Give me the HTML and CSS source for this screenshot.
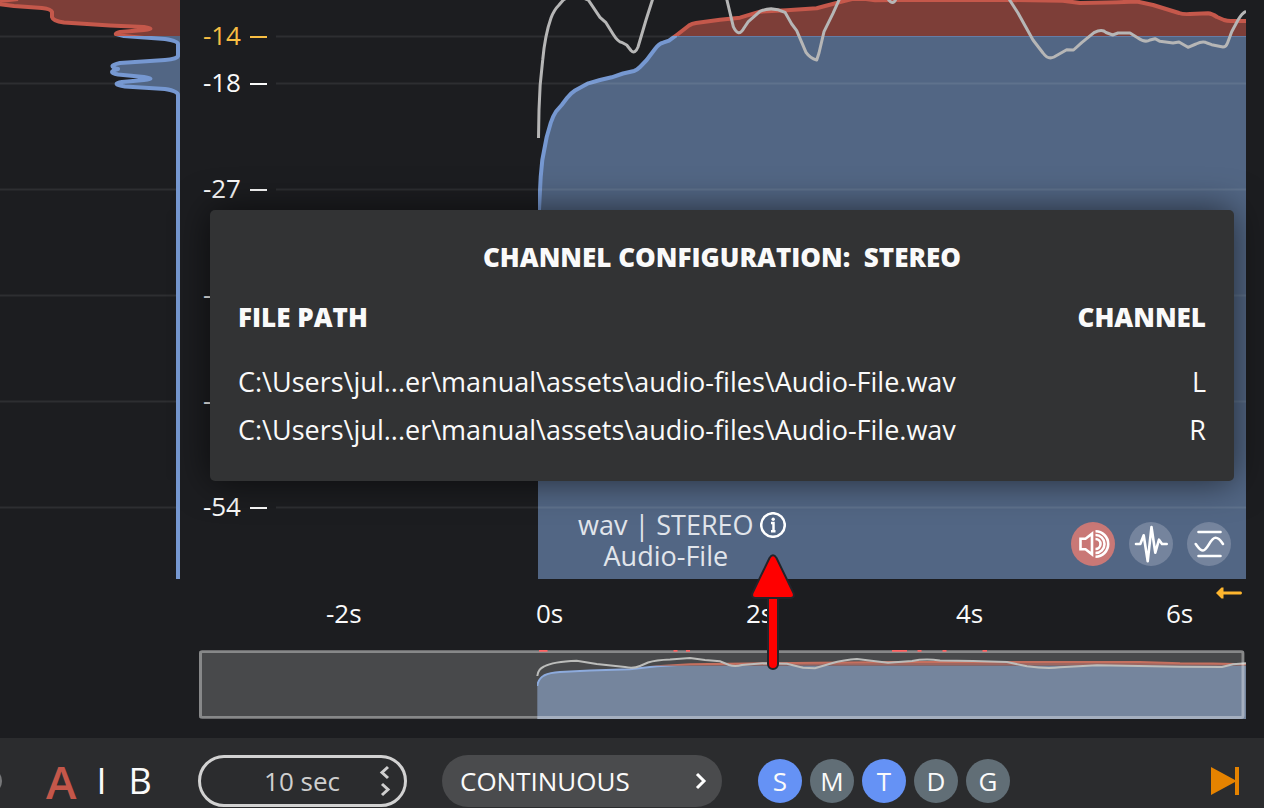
FILE: index.html
```html
<!DOCTYPE html>
<html lang="en">
<head>
<meta charset="utf-8">
<title>Loudness timeline</title>
<link rel="stylesheet" href="styles.css">
</head>
<body>
<main class="app">
  <section class="plots">
    <svg class="histogram" viewBox="0 0 180 579" preserveAspectRatio="none" aria-hidden="true">
      <defs>
        <clipPath id="h-over"><rect x="0" y="-5" width="180" height="41"/></clipPath>
        <clipPath id="h-under"><rect x="0" y="36" width="180" height="543"/></clipPath>
      </defs>
      <path class="grid" d="M0 36.500H180M0 83.500H180M0 189.500H180M0 295.500H180M0 401.500H180M0 507.500H180"/>
      <g clip-path="url(#h-over)">
        <path class="over-fill" d="M180 -4H0V4L14 6L42 8Q51 9 52 12V17Q53 21 64 22.500L110 25.500L144 27Q157 29 144 30L120 32Q110 34.500 124 36L180 41Z"/>
        <path class="over-line" d="M18 -1L0 1M-2 4L14 6L42 8Q51 9 52 12V17Q53 21 64 22.500L110 25.500L144 27Q157 29 144 30L120 32Q110 34.500 124 36L165 40"/>
      </g>
      <g clip-path="url(#h-under)">
        <path class="under-fill" d="M180 36H124L165 39Q178 41 178 44V56Q177 59 165 60L120 63Q106 66 118 69Q106 72 118 74.500L144 77Q157 79 144 80L122 82Q110 84 125 86.500L165 89Q178 91 178 95V579H180Z"/>
        <path class="under-line" d="M116 34L124 36L165 39Q178 41 178 44V56Q177 59 165 60L120 63Q106 66 118 69Q106 72 118 74.500L144 77Q157 79 144 80L122 82Q110 84 125 86.500L165 89Q178 91 178 95V582"/>
      </g>
    </svg>

    <ul class="scale">
      <li class="scale-item scale-item-first scale-item-target">-14</li>
      <li class="scale-item">-18</li>
      <li class="scale-item">-27</li>
      <li class="scale-item">-36</li>
      <li class="scale-item">-45</li>
      <li class="scale-item scale-item-last">-54</li>
    </ul>

    <div class="chart">
      <svg class="chart-plot" viewBox="276 0 970 579" preserveAspectRatio="none" aria-hidden="true">
        <defs>
          <clipPath id="c-over"><rect x="530" y="-10" width="716" height="46"/></clipPath>
          <clipPath id="c-under"><rect x="538" y="36" width="708" height="543"/></clipPath>
          <path id="level" d="M538 579V250L539 210L540.700 177L542.300 160L546.700 137L550.700 123Q553 116 556 111.500L561.700 105L567 98Q571 93 575 90.500L588.300 83.300L600 80L611.700 77.300L623 73.500L634 71Q637 70 640 67L646.700 60L655 49Q659 43.500 663 42.700L669 40.700L676.700 35L689 25.500Q692 23.500 696 23L720 19.700L740 17.700L760 11.700L786.700 10.300L816.700 8.300L825 6L843 1.300L852 -1L866 -1L875 .3L893 0L1006 0L1063 .7L1080 3L1117 2.300L1137 1.500L1153 5L1179 13Q1183 14.500 1190 14L1208 13.300Q1212 13.500 1217 17L1224 20Q1227 21 1231 21L1250 21V579Z"/>
        </defs>
        <g clip-path="url(#c-under)">
          <use href="#level" class="under-fill"/>
          <use href="#level" class="under-line"/>
          <path class="under-fill" d="M543 250H1247V582H538V250Z"/>
          <path class="threshold" d="M677 36.500H1246"/>
        </g>
        <g clip-path="url(#c-over)">
          <use href="#level" class="over-fill"/>
          <use href="#level" class="over-line"/>
        </g>
        <path class="grid" d="M276 36.500H677M276 83.500H1246M276 189.500H1246M276 295.500H1246M276 401.500H1246M276 507.500H1246"/>
        <path class="momentary" d="M538.500 138L539 110Q539.500 85 542.700 60Q545 35 551 18Q554 10 559 5L563.300 0L573 -6L588.300 0L600 17.300L606 22.700L613 34Q618 42 622 42.500L626.700 45L631 50.500Q635 54.500 638 47L646 20L652.700 -1M726.700 -1L733.300 26.700Q738.500 38 744 28L748.300 21.700L760 11.300Q772 6 785 12.300L791.700 24L796.700 30.700L806 52.300Q810 58 816.700 60L819 53L824 31.700L833 13.300L839.500 -1M888 -1Q893 6 896 -1M1009 -1L1018 13L1033 40L1043 53Q1048 60 1054 57L1066.700 49.700L1073.500 50L1081.700 42.700L1094 32.700Q1102 28.500 1106 32.500L1112.700 35L1118 33L1130 33L1138 38Q1145 43 1150 40L1155 38.700L1160 41.300L1173 43L1179 42L1188 47.300L1196 44Q1203 40.500 1207 43L1211.700 44.700L1223 47Q1226 47 1227.500 43L1231.700 31.700L1238 20Q1242 13 1246 11.300"/>
      </svg>

      <div class="clip-bar">
        <div class="clip-info">
          <span class="clip-format">wav | STEREO</span>
          <button class="info-button" type="button" aria-label="Channel configuration">
            <svg class="info-icon" viewBox="0 0 26 26" aria-hidden="true"><circle cx="13" cy="13" r="11.800"/><path d="M11 11H13.500V19M11 19.300H15.500"/><circle class="info-dot" cx="13.200" cy="7.200" r="1.700"/></svg>
            <svg class="pointer" viewBox="0 0 46 118" aria-hidden="true">
              <rect x="18" y="40" width="10" height="76" rx="5"/>
              <path d="M19.500 5Q23 -.5 26.500 5L43.500 40Q45 45 40.500 45H5.500Q1 45 2.500 40Z"/>
            </svg>
          </button>
          <span class="clip-name">Audio-File</span>
        </div>
        <div class="clip-tools">
          <button class="tool tool-active" type="button" aria-label="Listen">
            <svg viewBox="0 0 44 44" aria-hidden="true"><path d="M9.500 16.700H14.500L21 11.700V32.300L14.500 27.300H9.500Z"/><path d="M24.500 17A5 5 0 0 1 24.500 27M24.500 13A9 9 0 0 1 24.500 31M24.500 9.300A12.700 12.700 0 0 1 24.500 34.700"/></svg>
          </button>
          <button class="tool" type="button" aria-label="Waveform">
            <svg viewBox="0 0 44 44" aria-hidden="true"><path d="M7 22H11.300L14.700 13.300L18.700 39.300L22.500 5L26.300 30.700L30 17.700L33 22H37.700"/></svg>
          </button>
          <button class="tool" type="button" aria-label="Limits">
            <svg viewBox="0 0 44 44" aria-hidden="true"><path d="M11.500 10H33.500M11.500 34H33.500M8.700 22C11 25 13 28.500 16 28.500C20.500 28.500 23.500 15.800 28.500 15.800C32 15.800 34 19 36 22"/></svg>
          </button>
        </div>
      </div>
    </div>

    <aside class="popup" role="dialog" aria-labelledby="popup-title">
      <h2 class="popup-title" id="popup-title">CHANNEL CONFIGURATION:&nbsp; STEREO</h2>
      <table class="files">
        <thead><tr><th scope="col">FILE PATH</th><th class="files-channel" scope="col">CHANNEL</th></tr></thead>
        <tbody>
          <tr><td>C:\Users\jul...er\manual\assets\audio-files\Audio-File.wav</td><td class="files-channel">L</td></tr>
          <tr><td>C:\Users\jul...er\manual\assets\audio-files\Audio-File.wav</td><td class="files-channel">R</td></tr>
        </tbody>
      </table>
    </aside>
  </section>

  <div class="time-axis">
    <span class="tick">-2s</span>
    <span class="tick">0s</span>
    <span class="tick">2s</span>
    <span class="tick">4s</span>
    <div class="tick-end">
      <span class="tick">6s</span>
      <svg class="scroll-mark" viewBox="0 0 27 12" aria-hidden="true"><path d="M6 4.500H25Q27 6 25 7.500H6Z"/><path d="M0 6L5.500 .5H7.500V11.500H5.500Z"/></svg>
    </div>
  </div>

  <svg class="overview" viewBox="198 650 1048 69" preserveAspectRatio="none" role="img" aria-label="Timeline overview">
    <defs>
      <clipPath id="o-over"><rect x="537" y="650" width="709" height="15.500"/></clipPath>
      <clipPath id="o-under"><rect x="537" y="665.500" width="709" height="54"/></clipPath>
      <path id="overview-level" d="M537.300 686Q538 679 544 675.500Q550 672.500 560 672L590 670.500L630 669.300L656.700 666.300L690 664.300L770 663.300L890 662L1140 662L1180 663.300L1213 663.500L1246 664.300"/>
    </defs>
    <rect class="overview-base" x="199" y="651" width="1045" height="67"/>
    <g clip-path="url(#o-under)">
      <path class="overview-under" d="M537.300 719V686Q538 679 544 675.500Q550 672.500 560 672L590 670.500L630 669.300L656.700 666.300L675 665H1246V719Z"/>
      <use href="#overview-level" class="overview-line overview-line-under"/>
    </g>
    <g clip-path="url(#o-over)">
      <path class="overview-over" d="M660 666L690 664.300L770 663.300L890 662L1140 662L1180 663.300L1246 664.300V666Z"/>
      <use href="#overview-level" class="overview-line overview-line-over"/>
    </g>
    <path class="overview-line overview-line-momentary" d="M537.300 676Q538 669 544 666.500Q553 661.500 576.700 660.700L596.700 664L625 667Q633 669 640 666L648 662.500Q656 660 670 659.500L690 658L705 660L720 661.300L729 665Q735 667 742 665L763 663.300L787 663.700L803 667.700L815 668.300L830 663.700Q845 659.500 857 659L888 662.700L912 661Q925 658.500 940 660.500L973 661L1007 662L1027 666.300Q1047 669 1060 667.300L1097 665.300L1180 666.700L1222 667L1233 664.300L1246 663.300"/>
    <rect class="overview-frame" x="200.500" y="651.500" width="1042.500" height="66" rx="2"/>
    <path class="peaks" d="M539 650.700H547.500M673.500 650.700H677.500M686 650.700H690M892 650.700H907M917.500 650.700H921.500M942.500 650.700H946.500M982.500 650.700H987"/>
  </svg>

  <footer class="toolbar">
    <button class="knob" type="button" aria-label="Previous"></button>
    <div class="ab">
      <button class="ab-button ab-active" type="button">A</button>
      <span class="ab-divider">I</span>
      <button class="ab-button" type="button">B</button>
    </div>
    <div class="duration">
      <input class="duration-input" type="text" value="10 sec" aria-label="Window length">
      <div class="stepper">
        <button class="step" type="button" aria-label="Shorter"><svg viewBox="0 0 12 15" aria-hidden="true"><path d="M9 2L3 7.500L9 13"/></svg></button>
        <button class="step" type="button" aria-label="Longer"><svg viewBox="0 0 12 15" aria-hidden="true"><path d="M3 2L9 7.500L3 13"/></svg></button>
      </div>
    </div>
    <button class="mode" type="button">CONTINUOUS
      <svg class="mode-chevron" viewBox="0 0 12 18" aria-hidden="true"><path d="M2 2L9 9L2 16"/></svg>
    </button>
    <div class="toggles">
      <button class="toggle toggle-on" type="button" aria-pressed="true">S</button>
      <button class="toggle" type="button" aria-pressed="false">M</button>
      <button class="toggle toggle-on" type="button" aria-pressed="true">T</button>
      <button class="toggle" type="button" aria-pressed="false">D</button>
      <button class="toggle" type="button" aria-pressed="false">G</button>
    </div>
    <button class="skip" type="button" aria-label="Follow playhead">
      <svg viewBox="0 0 30 28" aria-hidden="true"><path d="M1 0L25 13V0H29V28H25V15L1 28Z"/></svg>
    </button>
  </footer>
</main>
</body>
</html>
```

FILE: styles.css
```css
* { box-sizing: border-box; }

body {
  margin: 0;
  background: #1c1d20;
  color: #fafafa;
  font-family: "Open Sans", "Noto Sans", sans-serif;
  font-size: 26px;
  font-weight: 500;
  line-height: 31px;
}

button, input {
  margin: 0;
  padding: 0;
  border: 0;
  background: none;
  color: inherit;
  font: inherit;
}

button { cursor: pointer; }
svg { display: block; }

.app {
  display: flex;
  flex-direction: column;
  min-height: 100vh;
  overflow: hidden;
}

/* Plots */
.plots {
  position: relative;
  display: grid;
  grid-template-columns: 180px 96px 1fr;
  padding-right: 18px;
}

.histogram { width: 100%; height: 579px; }

.grid { fill: none; stroke: rgba(255, 255, 255, 0.08); stroke-width: 2px; }
.over-fill { fill: #7d3e38; }
.under-fill { fill: #526684; }
.over-line, .under-line, .momentary {
  fill: none;
  stroke-width: 4px;
  stroke-linejoin: round;
}
.over-line { stroke: #c5584b; }
.under-line { stroke: #7698d1; }
.momentary { stroke: #b6b6b6; stroke-width: 3px; }
.threshold { fill: none; stroke: #647da6; stroke-width: 1px; }

.scale {
  margin: 0;
  padding: 20px 9px 0 0;
  list-style: none;
}

.scale-item {
  display: flex;
  justify-content: flex-end;
  gap: 9px;
  height: 106px;
}
.scale-item-first { height: 47px; }
.scale-item-last { height: auto; }
.scale-item-target { color: #f8be43; }
.scale-item::after {
  content: "";
  width: 17px;
  height: 2px;
  margin-top: 16px;
  background: currentColor;
}

.chart { display: grid; grid-template-columns: 262fr 708fr; }
.chart-plot { grid-area: 1 / 1 / 2 / 3; width: 100%; height: 579px; }

.clip-bar {
  grid-area: 1 / 2;
  align-self: end;
  display: flex;
  justify-content: space-between;
  align-items: center;
  padding: 0 15px 8px 40px;
}

.clip-info {
  display: grid;
  grid-template-columns: auto auto;
  column-gap: 6px;
  align-items: center;
  text-align: center;
  color: #e1e5eb;
  font-size: 27px;
}

.info-button { position: relative; z-index: 3; width: 26px; height: 26px; }
.info-icon { width: 26px; height: 26px; fill: none; stroke: #fff; stroke-width: 2.500px; }
.info-icon .info-dot { fill: #fff; stroke: none; }

.pointer {
  position: absolute;
  top: 41px;
  left: -10px;
  width: 46px;
  height: 118px;
  fill: #f00;
  stroke: #23242a;
  stroke-width: 2px;
  pointer-events: none;
}

.clip-tools { display: flex; gap: 14px; padding-top: 8px; }
.tool { width: 44px; height: 44px; border-radius: 50%; background: #75849d; }
.tool-active { background: #c97876; }
.tool svg {
  fill: none;
  stroke: #fff;
  stroke-width: 2.600px;
  stroke-linecap: round;
  stroke-linejoin: round;
}
.tool-active svg { stroke-linecap: butt; stroke-linejoin: miter; }

/* Channel popup */
.popup {
  position: absolute;
  top: 210px;
  left: 210px;
  right: 30px;
  z-index: 2;
  padding: 29px 28px 27px;
  border-radius: 5px;
  background: #323334;
  box-shadow: 0 0 36px rgba(0, 0, 0, 0.6);
}

.popup-title {
  margin: 0;
  font-size: 26px;
  font-weight: 800;
  line-height: 36px;
  text-align: center;
}

.files { width: 100%; border-collapse: collapse; }
.files th {
  padding: 24px 0 23px;
  font-weight: 800;
  line-height: 36px;
  text-align: left;
}
.files td { padding: 0; font-size: 27px; line-height: 48px; }
.files .files-channel { text-align: right; }

/* Time axis */
.time-axis {
  display: grid;
  grid-template-columns: 210fr 210fr 210fr 210fr 98fr;
  height: 71px;
  padding: 8px 0 0 326px;
}
.tick { padding-top: 11px; }
.tick-end { display: flex; justify-content: space-between; padding-right: 21px; }
.scroll-mark { width: 27px; height: 12px; fill: #fdb52e; }

/* Overview */
.overview { width: calc(100% - 216px); height: 69px; margin: 0 18px 19px 198px; }
.overview-base { fill: #48494b; }
.overview-under { fill: #75859d; }
.overview-over { fill: #9d6660; }
.overview-line { fill: none; stroke-width: 2px; }
.overview-line-under { stroke: #8dabdd; }
.overview-line-over { stroke: #c5705f; }
.overview-line-momentary { stroke: #bcbdbb; }
.overview-frame { fill: none; stroke: rgba(255, 255, 255, 0.35); stroke-width: 3px; }
.peaks { fill: none; stroke: #ff6464; stroke-width: 2px; }

/* Toolbar */
.toolbar {
  display: flex;
  align-items: center;
  flex: 1;
  min-height: 70px;
  padding: 16px 24px 0 0;
  background: #2b2c2e;
}

.knob { width: 26px; height: 26px; margin-left: -24px; border-radius: 50%; background: #77787a; }

.ab {
  display: flex;
  align-items: center;
  width: 196px;
  padding-left: 44px;
  gap: 20px;
  font-size: 36px;
  line-height: 48px;
}
.ab-active { color: #c4574a; font-size: 46px; font-weight: 600; line-height: 46px; }
.ab-button:last-child { padding-left: 2px; }

.duration {
  display: flex;
  align-items: center;
  width: 209px;
  height: 52px;
  padding-right: 13px;
  border: 3px solid #d2d2d2;
  border-radius: 26px;
  color: #cfcfcf;
}
.duration-input { width: 100%; min-width: 0; padding-left: 24px; text-align: center; outline: 0; }
.stepper { display: flex; flex-direction: column; gap: 2px; }
.step { width: 12px; height: 15px; }
.step svg { fill: none; stroke: #cfcfcf; stroke-width: 3px; }

.mode {
  display: flex;
  align-items: center;
  justify-content: space-between;
  width: 280px;
  height: 52px;
  margin-left: 35px;
  padding: 0 15px 0 18px;
  border-radius: 26px;
  background: #4a4b4d;
}
.mode-chevron { width: 12px; height: 18px; fill: none; stroke: #fff; stroke-width: 3px; }

.toggles { display: flex; gap: 8px; margin-left: 36px; }
.toggle { width: 44px; height: 44px; border-radius: 50%; background: #616e76; }
.toggle-on { background: #6592f5; }

.skip { margin-left: auto; }
.skip svg { width: 30px; height: 28px; fill: #e58300; }
```
